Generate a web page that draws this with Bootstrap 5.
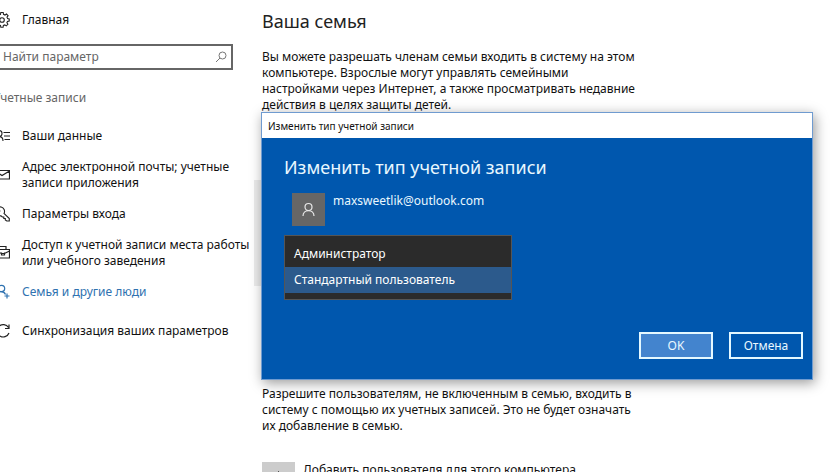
<!DOCTYPE html>
<html lang="ru">
<head>
<meta charset="utf-8">
<meta name="viewport" content="width=device-width, initial-scale=1">
<title>Семья и другие люди</title>
<link href="https://cdn.jsdelivr.net/npm/bootstrap@5.3.0/dist/css/bootstrap.min.css" rel="stylesheet">
<style>
body{font:12px/16px "Noto Sans","Open Sans",sans-serif;color:#111;background:#fff;overflow:hidden}
.settings{min-height:100vh}
.side{flex:0 0 268px;margin-left:-6px;padding:8px 8px 0 0}
.entry{display:flex;align-items:center;gap:12px;min-height:39px;color:#111;text-decoration:none}
.entry svg{flex:none}
.home{min-height:24px}
.entry.current{color:#2f72b0}
.find{width:calc(100% - 21px);height:26px;margin-top:12px;border:2px solid #666;padding:0 4px 0 7px}
.find input{min-width:0;border:0;outline:0;background:none;padding:0;color:#555}
.find input::placeholder{color:#666;opacity:1}
.find button{border:0;background:none;padding:0;display:flex}
.section{font-size:12px;line-height:16px;color:#666;margin:20px 0 10px -1px;font-weight:400}
.content{padding-top:9px}
.content h1{font-size:18px;line-height:24px;font-weight:400;margin:0 0 16px;color:#222}
.content p{margin:0}
.member{width:360px;height:106px;margin:67px 0 100px -8px;background:#ececec}
.plus{width:33px;height:33px;background:#ccc;border:0;padding:0}
.dialog-win{position:absolute;left:261px;top:112px;width:calc(100vw - 288px);min-height:267px;background:#0057ae;border:1px solid #6f9bd0;box-shadow:2px 3px 12px rgba(0,0,0,.4);color:#e9f8ff}
.titlebar{height:25px;background:#fff;color:#111;font-size:10px;padding:0 6px}
.dialog-body{padding:16px 9px 20px 22px}
.dialog-body h2{font-size:18px;line-height:26px;font-weight:400;margin:0 0 13px}
.avatar{width:33px;height:33px;background:#666}
.role{display:block;width:228px;height:65px;margin-top:9px;border:1px solid #555;border-radius:0;background:#2b2b2b;padding:5px 0;overflow:hidden;outline:0;appearance:none}
.role option{height:26px;padding:4px 9px;min-height:26px;color:#fff}
.role option:checked{background:#2c5a8c linear-gradient(#2c5a8c,#2c5a8c);color:#fff;-webkit-text-fill-color:#fff}
.actions{margin-top:32px}
.btn-win{width:74px;height:27px;border:2px solid #e4f8ff;border-radius:0;color:#e9f8ff;padding:0;font-size:12px;line-height:16px}
.btn-win.primary{background:#4384ce}
</style>
</head>
<body>
<div class="settings d-flex">
<aside class="side">
<a href="#" class="entry home"><svg width="16" height="16" viewBox="0 0 16 16" fill="none" stroke="#222" stroke-width="1.1"><path d="M6.800 1.500h2.400l.3 1.800 1.500.7 1.500-1 1.600 1.700-1.100 1.400.6 1.500 1.600.3v2.200l-1.700.3-.6 1.400 1 1.500-1.600 1.600-1.500-1-1.400.6-.3 1.700H6.800l-.3-1.700-1.400-.6-1.500 1L2 13.300l1-1.500-.6-1.400-1.800-.3V7.900l1.700-.3.6-1.500-1-1.400L3.500 3 5 4l1.500-.7z" transform="translate(0 -1)"/><circle cx="8" cy="8" r="2.300"/></svg><span>Главная</span></a>
<form class="find d-flex align-items-center"><input type="search" class="flex-grow-1" placeholder="Найти параметр" aria-label="Найти параметр"><button type="button" aria-label="Найти"><svg width="12" height="12" viewBox="0 0 12 12" fill="none" stroke="#777"><circle cx="7.500" cy="4.500" r="3.500"/><path d="M5 7 1 11"/></svg></button></form>
<h2 class="section">Учетные записи</h2>
<nav>
<a href="#" class="entry"><svg width="16" height="16" viewBox="0 0 16 16" fill="none" stroke="#222" stroke-width="1.100"><circle cx="5" cy="5.500" r="3"/><path d="M1 13c0-6 8-6 8 0M9.500 4.500H16M10 8h6M10.500 11.500H16"/></svg><span>Ваши данные</span></a>
<a href="#" class="entry"><svg width="16" height="16" viewBox="0 0 16 16" fill="none" stroke="#222" stroke-width="1.200"><path d="M.5 3.500h15v8.500H.5zM.5 4 8 8.500 15.500 4"/></svg><span>Адрес электронной почты; учетные<br>записи приложения</span></a>
<a href="#" class="entry"><svg width="16" height="16" viewBox="0 0 16 16" fill="none" stroke="#222" stroke-width="1.100"><path d="M10 7.500a4.500 4.500 0 1 0-3 2.300l1.300 1.200h1.500v1.500h1.500V14l1.500 1h2.500v-2.500z"/><circle cx="5" cy="5" r=".8"/></svg><span>Параметры входа</span></a>
<a href="#" class="entry"><svg width="16" height="16" viewBox="0 0 16 16" fill="none" stroke="#222" stroke-width="1.200"><path d="M.5 4.500h15v8.500H.5zM5 4.500v-3h7v3M.5 6l7 2.500h3l5-2.500M7.500 7.500V10h3V7.500"/></svg><span>Доступ к учетной записи места работы<br>или учебного заведения</span></a>
<a href="#" class="entry current" aria-current="page"><svg width="16" height="16" viewBox="0 0 16 16" fill="none" stroke="#2f72b0" stroke-width="1.200"><circle cx="7.500" cy="4.500" r="3.200"/><path d="M2 13c0-7 8-6.500 9.500-2.500M13 9.500v5M10.500 12h5"/></svg><span>Семья и другие люди</span></a>
<a href="#" class="entry"><svg width="16" height="16" viewBox="0 0 16 16" fill="none" stroke="#222" stroke-width="1.200"><path d="M14.500 4.500A6.200 6.200 0 1 0 15 10M15 1.500v4h-4"/></svg><span>Синхронизация ваших параметров</span></a>
</nav>
</aside>
<main class="content flex-grow-1">
<h1>Ваша семья</h1>
<p>Вы можете разрешать членам семьи входить в систему на этом<br>компьютере. Взрослые могут управлять семейными<br>настройками через Интернет, а также просматривать недавние<br>действия в целях защиты детей.</p>
<div class="member"></div>
<p>Разрешите пользователям, не включенным в семью, входить в<br>систему с помощью их учетных записей. Это не будет означать<br>их добавление в семью.</p>
<div class="d-flex mt-4 pt-1 gap-2"><button type="button" id="add" class="plus flex-shrink-0" aria-label="Добавить"><svg width="17" height="17" viewBox="0 0 17 17" stroke="#555"><path d="M8.500 1v15M1 8.500h15"/></svg></button><label for="add">Добавить пользователя для этого компьютера</label></div>
</main>
</div>
<section class="dialog-win" role="dialog" aria-labelledby="dlg">
<div class="titlebar d-flex align-items-center">Изменить тип учетной записи</div>
<div class="dialog-body">
<h2 id="dlg">Изменить тип учетной записи</h2>
<div class="d-flex gap-2 ms-2"><div class="avatar d-flex align-items-center justify-content-center"><svg width="15" height="15" viewBox="0 0 15 15" fill="none" stroke="#e8e8e8" stroke-width="1.200"><circle cx="7.500" cy="5" r="3.500"/><path d="M2 14c0-7.300 11-7.300 11 0"/></svg></div><span>maxsweetlik@outlook.com</span></div>
<select class="role" size="2" aria-label="Тип учетной записи"><option>Администратор</option><option selected>Стандартный пользователь</option></select>
<div class="actions d-flex justify-content-end gap-3"><button type="button" class="btn btn-win primary">OK</button><button type="button" class="btn btn-win">Отмена</button></div>
</div>
</section>
<script src="https://cdn.jsdelivr.net/npm/bootstrap@5.3.0/dist/js/bootstrap.bundle.min.js"></script>
</body>
</html>
